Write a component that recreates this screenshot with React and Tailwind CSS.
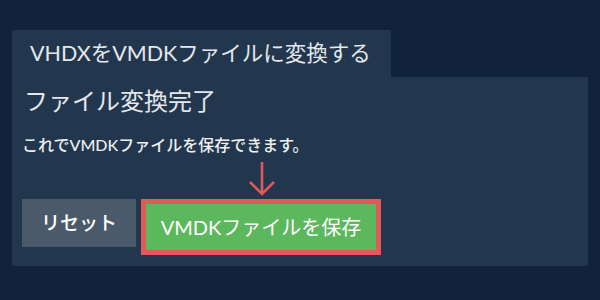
import React from 'react'

const FONT = { fontFamily: 'Lato, "Noto Sans CJK JP", sans-serif' }

function DownArrow() {
  return (
    <svg width="30" height="36" viewBox="0 0 30 36" className="block">
      <path d="M15 1 V33 M3 21 L15 33 L27 21" fill="none" stroke="#e05a5a" strokeWidth="2.6" />
    </svg>
  )
}

export default function App() {
  return (
    <div className="w-[600px] h-[300px] bg-[#11233a] px-3 pt-[30px]" style={FONT}>
      <div className="flex h-[47px] w-[379px] items-center bg-[#22374d] pl-[18px] text-[21.5px] text-[#e4e8ec]">
        VHDXをVMDKファイルに変換する
      </div>
      <div className="h-[189px] w-[576px] bg-[#22374d] px-3 pt-[9px]">
        <h2 className="text-[24px] leading-[30px] text-[#e4e8ec]">ファイル変換完了</h2>
        <p className="mt-[19px] ml-[-2px] text-[16px] font-medium leading-[20px] text-[#eef0f2]">
          これでVMDKファイルを保存できます。
        </p>
        <div className="relative mt-[44px] ml-[-2px] flex items-start gap-[5px]">
          <button className="h-[48px] w-[114px] bg-[#4a5a6b] text-[19px] font-medium text-white">リセット</button>
          <div className="absolute left-[225px] top-[-38px]">
            <DownArrow />
          </div>
          <button className="h-[56px] w-[240px] border-[5px] border-[#e05a5a] bg-[#5cb85c] text-[20px] text-white">
            VMDKファイルを保存
          </button>
        </div>
      </div>
    </div>
  )
}
